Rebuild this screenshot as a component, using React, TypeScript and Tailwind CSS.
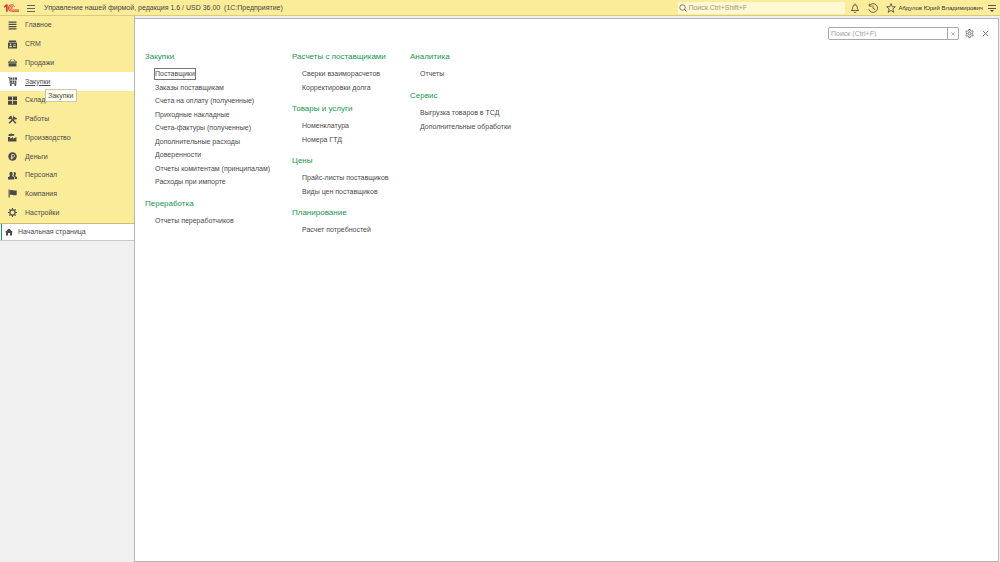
import React from 'react';

interface SectionData {
  title: string;
  items: string[];
}

const NAV_ITEMS = [
  { id: 'main', label: 'Главное' },
  { id: 'crm', label: 'CRM' },
  { id: 'sales', label: 'Продажи' },
  { id: 'purchases', label: 'Закупки' },
  { id: 'stock', label: 'Склад' },
  { id: 'works', label: 'Работы' },
  { id: 'production', label: 'Производство' },
  { id: 'money', label: 'Деньги' },
  { id: 'staff', label: 'Персонал' },
  { id: 'company', label: 'Компания' },
  { id: 'settings', label: 'Настройки' },
];

const COLUMNS: SectionData[][] = [
  [
    {
      title: 'Закупки',
      items: [
        'Поставщики',
        'Заказы поставщикам',
        'Счета на оплату (полученные)',
        'Приходные накладные',
        'Счета-фактуры (полученные)',
        'Дополнительные расходы',
        'Доверенности',
        'Отчеты комитентам (принципалам)',
        'Расходы при импорте',
      ],
    },
    { title: 'Переработка', items: ['Отчеты переработчиков'] },
  ],
  [
    { title: 'Расчеты с поставщиками', items: ['Сверки взаиморасчетов', 'Корректировки долга'] },
    { title: 'Товары и услуги', items: ['Номенклатура', 'Номера ГТД'] },
    { title: 'Цены', items: ['Прайс-листы поставщиков', 'Виды цен поставщиков'] },
    { title: 'Планирование', items: ['Расчет потребностей'] },
  ],
  [
    { title: 'Аналитика', items: ['Отчеты'] },
    { title: 'Сервис', items: ['Выгрузка товаров в ТСД', 'Дополнительные обработки'] },
  ],
];

// Sidebar glyphs, all drawn on a 16x16 grid
const NAV_ICONS: Record<string, React.ReactNode> = {
  main: <path d="M1 1h14v2H1zM1 5h14v2H1zM1 9h14v2H1zM1 13h14v2H1z" />,
  crm: (
    <path
      fillRule="evenodd"
      d="M2 1h12l1 3H1zM0 5h16v10H0zM3 8a1.500 1.500 0 1 0 3 0a1.500 1.500 0 1 0-3 0M2 13h5v-1.500L5.500 10.500h-2L2 11.500zM9 8v1.500h5V8zM9 11v1.500h5V11z"
    />
  ),
  sales: (
    <>
      <path d="M0 6h16v2.500H0zM1 9.500h14V15H1z" />
      <path d="M3 6l3-4M13 6l-3-4" stroke="currentColor" strokeWidth="1.500" />
    </>
  ),
  purchases: (
    <>
      <path d="M4 1h3v4H4zM8 1h3v4H8zM12 1h4v4h-4zM4 6h3v4H4zM8 6h3v4H8zM12 6h3v4h-3z" />
      <path d="M0 1h2.500l1.500 10.500h11" fill="none" stroke="currentColor" strokeWidth="1.400" />
      <circle cx="5" cy="14" r="1.800" />
      <circle cx="13" cy="14" r="1.800" />
    </>
  ),
  stock: <path d="M0 1h7.300v6H0zM8.700 1H16v6H8.700zM0 8.300h7.300V14H0zM8.700 8.300H16V14H8.700zM0 14.500h16V16H0z" />,
  works: (
    <>
      <path d="M3 3l11 11.500M12.500 4L2 14.500" fill="none" stroke="currentColor" strokeWidth="2.600" />
      <path d="M0 6L5.500 1l2 2.500L3 8zM10.500 0l.5 5 5 .5L15 8h-4L8.500 5.500z" />
    </>
  ),
  production: (
    <>
      <path d="M0 15V7h4v3l5-3v3l6-3v8z" />
      <path d="M1 5c-1-2 1-4 3-3 1-2 4-1 4 0 2-1 4 0 3 2-1 2-3 1-4 1-1 1-5 1-6 0z" />
    </>
  ),
  money: (
    <>
      <circle cx="8" cy="8" r="7.500" />
      <path d="M6.500 13V4.500h3a2.200 2.200 0 0 1 0 4.500H5M5 11h4" fill="none" stroke="#fbec9a" strokeWidth="1.500" />
    </>
  ),
  staff: (
    <>
      <path d="M2.500 5a3 3.500 0 0 1 6 0c0 2-1 3-1 4l3.500 2v4H0v-4l3.500-2c0-1-1-2-1-4z" />
      <path d="M10 2c3-1 4.500 1 4 3.500 0 1.500-1 2-1 3.500l3 2v3h-4v-3.500L9.500 9c1-2 1.500-4 .5-7z" />
    </>
  ),
  company: <path d="M1 1h2v14H1zM3.500 2.500c4-2 5 1.500 12 0v8c-7 2-8-1.500-12 0z" />,
  settings: (
    <g fill="none" stroke="currentColor">
      <circle cx="8" cy="8" r="4.600" strokeWidth="2" />
      <path
        d="M8 0v3.500M8 12.500V16M0 8h3.500M12.500 8H16M2.300 2.300l2.500 2.500M11.200 11.200l2.500 2.500M13.700 2.300l-2.500 2.500M4.800 11.200l-2.500 2.500"
        strokeWidth="2"
      />
    </g>
  ),
};

const Logo = () => (
  <svg viewBox="0 0 45 24" className="h-2 w-[15px] shrink-0" aria-hidden="true">
    <path d="M0 7L7 1h4v22H6V8l-6 3z" fill="#e0322c" />
    <path
      d="M32 8C30 4 27 2 23 2a10 10 0 0 0 0 20h22M28 9c-1-2-3-3-5-3a6 6 0 0 0 0 12h22"
      fill="none"
      stroke="#e0322c"
      strokeWidth="2.600"
    />
    <path d="M21 12a2.500 2.500 0 1 0 5 0a2.500 2.500 0 1 0-5 0" fill="#e0322c" />
  </svg>
);

const MenuIcon = () => (
  <svg viewBox="0 0 8 8" className="size-2" stroke="currentColor" strokeWidth="0.800" aria-hidden="true">
    <path d="M0 1.500h8M0 4.500h8M0 7.500h8" />
  </svg>
);

const BellIcon = () => (
  <svg viewBox="0 0 16 16" className="size-2.5" fill="none" stroke="currentColor" strokeWidth="1.300" aria-hidden="true">
    <path d="M2 12c2-1.500 2.500-3 2.500-5.500a3.500 3.500 0 0 1 7 0c0 2.500.5 4 2.500 5.500zM8 1v2M6 14c.5 1.500 3.500 1.500 4 0" />
  </svg>
);

const HistoryIcon = () => (
  <svg viewBox="0 0 16 16" className="size-2.5" fill="none" stroke="currentColor" strokeWidth="1.300" aria-hidden="true">
    <path d="M2.500 4a7 7 0 1 1-1 6M2 1v4h4M8 4v4.500l3.500 2" />
  </svg>
);

const StarIcon = () => (
  <svg viewBox="0 0 16 16" className="size-2.5" fill="none" stroke="currentColor" strokeWidth="1.300" aria-hidden="true">
    <path d="M8 1l2 5h5l-4 3.500 1.500 5.500L8 11.800 3.500 15 5 9.500 1 6h5z" />
  </svg>
);

const PanelMenuIcon = () => (
  <svg viewBox="0 0 8 8" className="size-2" aria-hidden="true">
    <path d="M0 1.500h8M0 4.500h8" stroke="currentColor" strokeWidth="0.900" />
    <path d="M2 6h4L4 8z" fill="currentColor" />
  </svg>
);

const GearIcon = () => (
  <svg viewBox="0 0 18 18" className="size-[9px]" fill="none" stroke="currentColor" strokeWidth="1.500" aria-hidden="true">
    <path d="M7.500 1h3l.5 2.500 1.500 1 2.500-1 1.500 2.800-2 1.700v2l2 1.700-1.500 2.800-2.500-1-1.500 1-.5 2.500h-3L7 14.500l-1.500-1-2.500 1-1.500-2.800 2-1.700V8l-2-1.700L3 3.500l2.500 1 1.500-1z" />
    <circle cx="9" cy="9" r="3" />
  </svg>
);

const CloseIcon = ({ className }: { className: string }) => (
  <svg viewBox="0 0 8 8" className={className} stroke="currentColor" strokeWidth="0.900" aria-hidden="true">
    <path d="M1 1l6 6M7 1L1 7" />
  </svg>
);

const TopBar = () => (
  <header className="flex h-4 shrink-0 items-center border-b border-[#d9cb79] bg-[#fbec9a] px-1 text-[#444]">
    <Logo />
    <button type="button" aria-label="Меню" className="ml-2">
      <MenuIcon />
    </button>
    <h1 className="ml-[9px] grow whitespace-pre text-[7px]">
      {'Управление нашей фирмой, редакция 1.6 / USD 36,00  (1С:Предприятие)'}
    </h1>
    <label className="flex h-3 w-[167px] items-center gap-px bg-[#fff8d2] pl-px">
      <svg viewBox="0 0 16 16" className="size-2 shrink-0" fill="none" stroke="#555" strokeWidth="1.500" aria-hidden="true">
        <circle cx="7" cy="7" r="5.500" />
        <path d="M11 11l4 4" strokeWidth="2" />
      </svg>
      <input
        type="text"
        aria-label="Глобальный поиск"
        placeholder="Поиск Ctrl+Shift+F"
        className="h-3 min-w-0 grow bg-transparent text-[7px] outline-none placeholder:text-[#9c9878]"
      />
    </label>
    <div className="ml-[5px] flex items-center gap-2">
      <button type="button" aria-label="Уведомления"><BellIcon /></button>
      <button type="button" aria-label="История"><HistoryIcon /></button>
      <button type="button" aria-label="Избранное"><StarIcon /></button>
    </div>
    <a href="#user" className="ml-0.5 whitespace-nowrap text-[6px] text-[#333]">Абдулов Юрий Владимирович</a>
    <button type="button" aria-label="Сервис и настройки" className="ml-[5px]">
      <PanelMenuIcon />
    </button>
  </header>
);

const Sidebar = () => (
  <aside className="flex w-[135px] shrink-0 flex-col border-r border-[#b5b5b5] text-[7px] text-[#4a4a4a]">
    <nav className="flex h-52 flex-col border-b border-[#c9bd78] bg-[#fbec9a] pb-px">
      {NAV_ITEMS.map((item) => {
        const active = item.id === 'purchases';
        return (
          <a
            key={item.id}
            href={`#${item.id}`}
            className={`relative flex flex-1 items-center gap-2 pl-2 ${active ? 'bg-white underline' : ''}`}
          >
            <svg viewBox="0 0 16 16" className="size-[9px] shrink-0" fill="currentColor" aria-hidden="true">
              {NAV_ICONS[item.id]}
            </svg>
            {item.label}
            {active && (
              <span
                role="tooltip"
                className="absolute left-[45px] top-[17px] z-10 flex h-[13px] items-center border border-[#c8c8b4] bg-[#ffffee] px-0.5"
              >
                Закупки
              </span>
            )}
          </a>
        );
      })}
    </nav>
    <a href="#home" className="flex h-[17px] items-center border-b border-[#c8c8c8] bg-white pl-px">
      <span className="h-full w-px bg-[#159a56]" />
      <svg viewBox="0 0 16 16" className="ml-[3px] mr-[5px] size-2" fill="currentColor" aria-hidden="true">
        <path d="M8 1l8 7.500h-2V15H10v-5H6v5H2V8.500H0z" />
      </svg>
      Начальная страница
    </a>
  </aside>
);

const Section = ({ title, items }: SectionData) => (
  <section className="mb-[5px]">
    <h2 className="flex h-5 items-center whitespace-nowrap text-[8px] text-[#16964f]">{title}</h2>
    <ul className="pl-2.5 text-[7px] text-[#4a4a4a]">
      {items.map((item) => (
        <li key={item} className="flex items-center odd:h-3.5 even:h-[13px]">
          <a
            href="#item"
            className={`whitespace-nowrap ${item === 'Поставщики' ? 'outline outline-[#777]' : ''}`}
          >
            {item}
          </a>
        </li>
      ))}
    </ul>
  </section>
);

const App: React.FC = () => {
  return (
    <div className="flex min-h-screen flex-col bg-[#f0f0f0] font-['Liberation_Sans',Arial,sans-serif] leading-[10px]">
      <TopBar />
      <div className="flex grow">
        <Sidebar />
        <main className="mr-px mt-0.5 grow border-b border-r border-t border-[#b5b5b5] bg-white">
          <div className="flex items-center justify-end pr-[9px] pt-2 text-[#555]">
            <div className="flex h-[13px] w-[131px] rounded-[2px] border border-[#a8a8a8]">
              <input
                type="text"
                aria-label="Поиск"
                placeholder="Поиск (Ctrl+F)"
                className="min-w-0 grow pl-0.5 text-[7px] outline-none placeholder:text-[#a0a0a0]"
              />
              <button
                type="button"
                aria-label="Очистить"
                className="flex w-[11px] items-center justify-center border-l border-[#a8a8a8]"
              >
                <CloseIcon className="size-1" />
              </button>
            </div>
            <button type="button" aria-label="Настройка" className="ml-1.5"><GearIcon /></button>
            <button type="button" aria-label="Закрыть" className="ml-2"><CloseIcon className="size-[7px]" /></button>
          </div>
          <div className="grid grid-cols-[147px_118px_auto] pl-2.5 pt-[7px]">
            {COLUMNS.map((column) => (
              <div key={column[0].title}>
                {column.map((section) => (
                  <Section key={section.title} {...section} />
                ))}
              </div>
            ))}
          </div>
        </main>
      </div>
    </div>
  );
};

export default App;
